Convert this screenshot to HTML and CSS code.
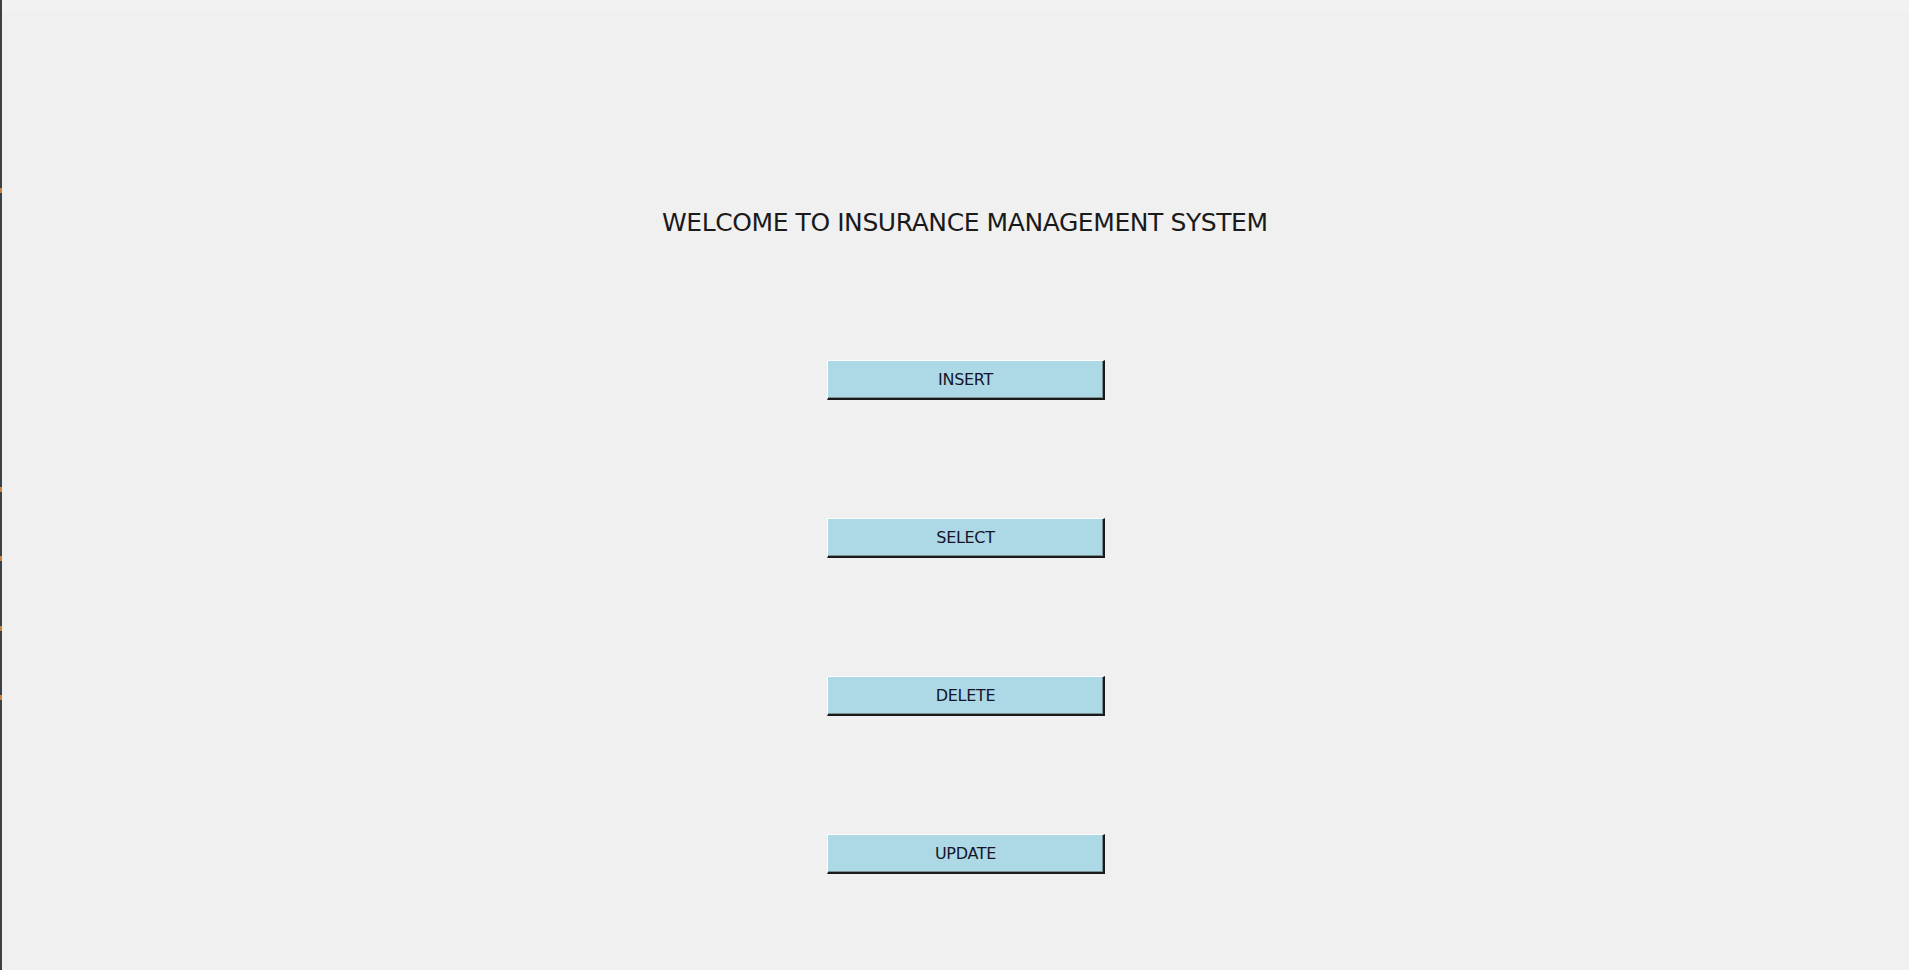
FILE: index.html
```html
<!DOCTYPE html>
<html>
<head>
<meta charset="utf-8">
<link rel="stylesheet" href="styles.css">
<title>Insurance Management System</title>
</head>
<body>
<div class="app">
  <div class="edge">
    <span class="mark m1"></span>
    <span class="mark m2"></span>
    <span class="mark m3"></span>
    <span class="mark m4"></span>
    <span class="mark m5"></span>
  </div>
  <div class="window">
    <div class="titlebar"></div>
    <div class="content">
      <h1 class="heading">WELCOME TO INSURANCE MANAGEMENT SYSTEM</h1>
      <div class="buttons">
        <button class="btn">INSERT</button>
        <button class="btn">SELECT</button>
        <button class="btn">DELETE</button>
        <button class="btn">UPDATE</button>
      </div>
    </div>
  </div>
</div>
</body>
</html>
```
FILE: styles.css
```css
html, body {
  margin: 0;
  padding: 0;
  width: 1909px;
  height: 970px;
  overflow: hidden;
  background: #f0f0f0;
}
.app {
  display: flex;
  width: 1909px;
  height: 970px;
}
.edge {
  width: 2px;
  flex: none;
  background: #3d4044;
  position: relative;
}
.mark {
  position: absolute;
  left: 0;
  width: 2px;
  height: 5px;
  background: #c8813a;
}
.m1 { top: 188px; }
.m2 { top: 487px; }
.m3 { top: 556px; }
.m4 { top: 626px; }
.m5 { top: 695px; }
.window {
  flex: 1;
  display: flex;
  flex-direction: column;
}
.titlebar {
  height: 12px;
  background: #f2f2f2;
  flex: none;
}
.content {
  flex: 1;
  display: flex;
  flex-direction: column;
  align-items: flex-start;
}
.heading {
  margin: 196px 0 0 660px;
  font-family: "DejaVu Sans", Tahoma, sans-serif;
  font-weight: normal;
  font-size: 25px;
  line-height: 30px;
  color: #1a1a1a;
  letter-spacing: -0.42px;
  white-space: nowrap;
}
.buttons {
  display: flex;
  flex-direction: column;
  gap: 118px;
  margin: 122px 0 0 825px;
}
.btn {
  width: 278px;
  height: 40px;
  box-sizing: border-box;
  margin: 0;
  padding: 0;
  background: #add8e6;
  border-style: solid;
  border-width: 1px 2px 2px 1px;
  border-color: #fdfdfd #1a1a1a #1a1a1a #fdfdfd;
  box-shadow: inset -1px -1px 0 #7c8f95;
  font-family: "DejaVu Sans", Tahoma, sans-serif;
  font-size: 16px;
  color: #15152a;
  text-align: center;
  letter-spacing: -0.3px;
}
```
